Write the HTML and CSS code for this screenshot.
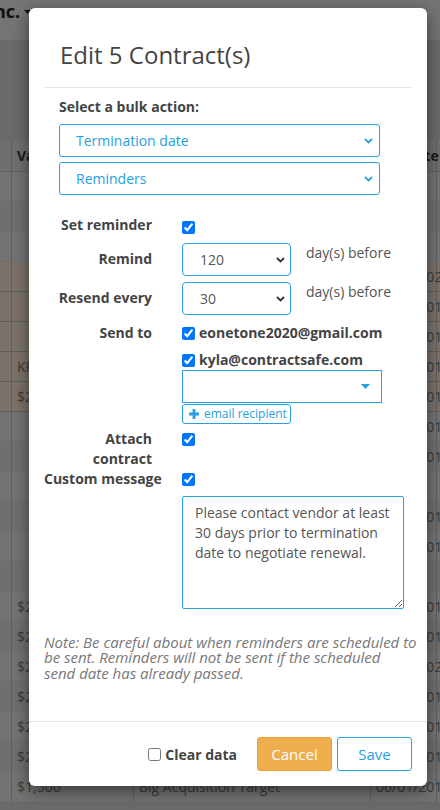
FILE: index.html
```html
<!DOCTYPE html>
<html lang="en">
<head>
<meta charset="utf-8">
<title>Edit Contracts</title>
<link rel="stylesheet" href="styles.css">
</head>
<body>
<div class="page">
  <div class="topbar">
    <span class="brand">Inc.</span>
    <svg class="brand-caret" width="7" height="4" viewBox="0 0 7 4"><path d="M0 0h7L3.5 4z" fill="currentColor"/></svg>
  </div>
  <div class="toolbar"></div>
  <div class="table">
    <div class="tr th"><div class="td"></div><div class="td">Value</div><div class="td">Counterparty</div><div class="td">End Date</div><div class="td">Status</div></div>
    <div class="tr"><div class="td"></div><div class="td"></div><div class="td"></div><div class="td"></div><div class="td"></div></div>
    <div class="tr"><div class="td"></div><div class="td"></div><div class="td"></div><div class="td"></div><div class="td"></div></div>
    <div class="tr"><div class="td"></div><div class="td"></div><div class="td"></div><div class="td"></div><div class="td"></div></div>
    <div class="tr tan"><div class="td"></div><div class="td"></div><div class="td">Acme Supplies</div><div class="td">05/01/2021</div><div class="td"></div></div>
    <div class="tr tan"><div class="td"></div><div class="td"></div><div class="td">Globex</div><div class="td">08/15/2019</div><div class="td"></div></div>
    <div class="tr tan"><div class="td"></div><div class="td"></div><div class="td">Initech</div><div class="td">11/30/2019</div><div class="td"></div></div>
    <div class="tr tan"><div class="td"></div><div class="td">KPI bonus</div><div class="td">Umbrella</div><div class="td">01/01/2019</div><div class="td"></div></div>
    <div class="tr tan"><div class="td"></div><div class="td">$2,500</div><div class="td">Hooli</div><div class="td">03/01/2019</div><div class="td"></div></div>
    <div class="tr"><div class="td"></div><div class="td"></div><div class="td"></div><div class="td">03/01/2019</div><div class="td"></div></div>
    <div class="tr"><div class="td"></div><div class="td"></div><div class="td"></div><div class="td">04/12/2019</div><div class="td"></div></div>
    <div class="tr"><div class="td"></div><div class="td"></div><div class="td"></div><div class="td"></div><div class="td"></div></div>
    <div class="tr"><div class="td"></div><div class="td"></div><div class="td"></div><div class="td">07/01/2019</div><div class="td"></div></div>
    <div class="tr"><div class="td"></div><div class="td"></div><div class="td"></div><div class="td">09/15/2019</div><div class="td"></div></div>
    <div class="tr"><div class="td"></div><div class="td"></div><div class="td"></div><div class="td"></div><div class="td"></div></div>
    <div class="tr"><div class="td"></div><div class="td">$2,000</div><div class="td"></div><div class="td">10/01/2019</div><div class="td"></div></div>
    <div class="tr"><div class="td"></div><div class="td">$2,000</div><div class="td"></div><div class="td">12/01/2019</div><div class="td"></div></div>
    <div class="tr"><div class="td"></div><div class="td">$2,400</div><div class="td"></div><div class="td">02/01/2020</div><div class="td"></div></div>
    <div class="tr"><div class="td"></div><div class="td">$2,000</div><div class="td"></div><div class="td">06/01/2019</div><div class="td"></div></div>
    <div class="tr"><div class="td"></div><div class="td">$2,200</div><div class="td"></div><div class="td">06/01/2019</div><div class="td"></div></div>
    <div class="tr"><div class="td"></div><div class="td">$2,000</div><div class="td"></div><div class="td">06/01/2019</div><div class="td"></div></div>
    <div class="tr"><div class="td"></div><div class="td">$1,500</div><div class="td">Big Acquisition Target</div><div class="td">06/01/2019</div><div class="td"></div></div>
  </div>
</div>

<div class="backdrop"></div>

<div class="modal">
  <div class="modal-header">
    <h4 class="modal-title">Edit 5 Contract(s)</h4>
  </div>
  <div class="modal-body">
    <div class="bulk">
      <div class="bulk-label">Select a bulk action:</div>
      <div class="select">
        <span>Termination date</span>
        <svg class="chev" width="9" height="6" viewBox="0 0 9 6"><path d="M1 1l3.5 3.5L8 1" fill="none" stroke="currentColor" stroke-width="1.8"/></svg>
      </div>
      <div class="select">
        <span>Reminders</span>
        <svg class="chev" width="9" height="6" viewBox="0 0 9 6"><path d="M1 1l3.5 3.5L8 1" fill="none" stroke="currentColor" stroke-width="1.8"/></svg>
      </div>
    </div>

    <div class="form">
      <div class="row">
        <div class="label">Set reminder</div>
        <div class="control"><input class="check check-first" type="checkbox" checked></div>
      </div>

      <div class="row row-remind">
        <div class="label label-select">Remind</div>
        <div class="control control-inline">
          <div class="select select-sm">
            <span>120</span>
            <svg class="chev" width="9" height="6" viewBox="0 0 9 6"><path d="M1 1l3.5 3.5L8 1" fill="none" stroke="currentColor" stroke-width="1.8"/></svg>
          </div>
          <span class="suffix">day(s) before</span>
        </div>
      </div>

      <div class="row row-resend">
        <div class="label label-select">Resend every</div>
        <div class="control control-inline">
          <div class="select select-sm">
            <span>30</span>
            <svg class="chev" width="9" height="6" viewBox="0 0 9 6"><path d="M1 1l3.5 3.5L8 1" fill="none" stroke="currentColor" stroke-width="1.8"/></svg>
          </div>
          <span class="suffix">day(s) before</span>
        </div>
      </div>

      <div class="row row-sendto">
        <div class="label">Send to</div>
        <div class="control">
          <label class="email"><input type="checkbox" checked> eonetone2020@gmail.com</label>
          <label class="email email-second"><input type="checkbox" checked> kyla@contractsafe.com</label>
          <div class="dropdown">
            <svg width="9" height="5" viewBox="0 0 9 5"><path d="M0 0h9L4.5 5z" fill="currentColor"/></svg>
          </div>
          <button class="add-btn" type="button">
            <svg width="10" height="10" viewBox="0 0 10 10"><path d="M3.6 0h2.8v10H3.6zM0 3.6h10v2.8H0z" fill="currentColor"/></svg>
            <span>email recipient</span>
          </button>
        </div>
      </div>

      <div class="row row-attach">
        <div class="label">Attach contract</div>
        <div class="control"><input class="check" type="checkbox" checked></div>
      </div>

      <div class="row">
        <div class="label">Custom&nbsp;message</div>
        <div class="control"><input class="check" type="checkbox" checked></div>
      </div>

      <div class="row row-message">
        <div class="label"></div>
        <div class="control">
          <textarea class="message">Please contact vendor at least 30 days prior to termination date to negotiate renewal.</textarea>
        </div>
      </div>
    </div>

    <p class="note">Note: Be careful about when reminders are scheduled to<br>be sent. Reminders will not be sent if the scheduled<br>send date has already passed.</p>
  </div>
  <div class="modal-footer">
    <label class="clear"><input type="checkbox"> Clear data</label>
    <button class="btn btn-cancel" type="button">Cancel</button>
    <button class="btn btn-save" type="button">Save</button>
  </div>
</div>
</body>
</html>
```

FILE: styles.css
```css
* {
  box-sizing: border-box;
}

html,
body {
  margin: 0;
  padding: 0;
}

body {
  position: relative;
  width: 440px;
  height: 810px;
  overflow: hidden;
  font-family: "Open Sans", "DejaVu Sans", sans-serif;
  font-size: 14px;
  color: #333;
  background: #d4d4d4;
}

/* ---------- page underneath ---------- */
.topbar {
  height: 40px;
  display: flex;
  align-items: flex-start;
  background: #e8e8e8;
  color: #222;
}

.brand {
  margin-left: -12px;
  font-size: 18px;
  font-weight: 700;
  line-height: 22px;
}

.brand-caret {
  margin: 10px 0 0 4px;
}

.toolbar {
  height: 100px;
}

.tr {
  display: grid;
  grid-template-columns: 12px 122px 237px 66px 1fr;
  height: 30px;
  background: #e6e6e6;
  border-bottom: 1px solid #dadada;
}

.tr:nth-child(odd) {
  background: #dedede;
}

.th {
  height: 32px;
  background: #e2e2e2;
  border-bottom: 1px solid #c4c4c4;
  font-weight: 700;
  color: #333;
}

.tr.tan {
  background: #f4e3d4;
  border-bottom: 1px solid #bdbab7;
}

.td {
  padding: 0 5px;
  border-right: 1px solid #bcbcbc;
  line-height: 30px;
  white-space: nowrap;
  overflow: hidden;
  color: #777;
}

.td:nth-child(4) {
  overflow: visible;
}

.th .td {
  line-height: 31px;
  color: #333;
}

.backdrop {
  position: absolute;
  inset: 0;
  background: rgba(0, 0, 0, 0.5);
}

/* ---------- modal ---------- */
.modal {
  position: absolute;
  left: 29px;
  top: 8px;
  width: 398px;
  background: #fff;
  border-radius: 6px;
  box-shadow: 0 5px 15px rgba(0, 0, 0, 0.5);
}

.modal-header {
  margin: 0 15px;
  padding: 31px 15px 16px 16px;
  border-bottom: 1px solid #e5e5e5;
}

.modal-title {
  margin: 0;
  font-size: 24px;
  font-weight: 400;
  line-height: 32px;
  color: #444;
}

.modal-body {
  padding: 9px 15px 40px;
}

.bulk {
  padding: 0 32px 0 15px;
}

.bulk-label {
  margin-bottom: 7px;
  font-weight: 700;
  line-height: 20px;
  color: #444;
}

.select {
  height: 33px;
  display: flex;
  align-items: center;
  justify-content: space-between;
  padding: 0 6px 0 16px;
  border: 1px solid #27a1e3;
  border-radius: 3px;
  line-height: 20px;
  color: #27a0e2;
}

.select + .select {
  margin-top: 5px;
}

.select-sm {
  width: 109px;
  padding: 0 5px 0 17px;
  border-radius: 4px;
  color: #555;
}

.select-sm .chev {
  color: #333;
}

.form {
  margin-top: 20px;
}

.row {
  display: grid;
  grid-template-columns: 108px 1fr;
  column-gap: 30px;
}

.row-remind {
  margin-top: 8px;
}

.row-resend {
  margin-top: 6px;
}

.row-sendto {
  margin-top: 8px;
}

.row-attach {
  margin-top: 5px;
}

.row-message {
  margin-top: 7px;
}

.label {
  min-width: 0;
  text-align: right;
  font-weight: 700;
  line-height: 20px;
  color: #444;
}

.label-select {
  padding-top: 6px;
}

.control {
  min-width: 0;
}

.control-inline {
  display: flex;
  align-items: flex-start;
}

.suffix {
  margin-left: 15px;
  line-height: 20px;
  color: #555;
}

input[type="checkbox"] {
  width: 13px;
  height: 13px;
  margin: 0;
}

.control .check {
  display: block;
  margin-top: 4px;
}

.control .check-first {
  margin-top: 6px;
}

.email {
  display: flex;
  align-items: center;
  gap: 4px;
  font-weight: 700;
  line-height: 20px;
  color: #444;
}

.email-second {
  margin-top: 7px;
}

.dropdown {
  width: 200px;
  height: 33px;
  display: flex;
  align-items: center;
  justify-content: flex-end;
  padding-right: 11px;
  border: 1px solid #27a1e3;
  color: #27a0e2;
}

.add-btn {
  width: 109px;
  height: 20px;
  margin-top: 1px;
  display: flex;
  align-items: center;
  gap: 5px;
  padding: 0 0 0 6px;
  border: 1px solid #27a1e3;
  border-radius: 3px;
  background: #fff;
  font-family: inherit;
  font-size: 12px;
  line-height: 16px;
  color: #27a0e2;
}

.message {
  display: block;
  width: 222px;
  height: 113px;
  margin: 0;
  padding: 6px 6px 6px 12px;
  border: 1px solid #27a1e3;
  border-radius: 2px;
  font-family: inherit;
  font-size: 14px;
  line-height: 20px;
  color: #555;
}

.note {
  margin: 26px -12px 0 0;
  font-size: 15px;
  font-style: italic;
  line-height: 15.4px;
  white-space: nowrap;
  color: #777;
}

.modal-footer {
  display: flex;
  justify-content: flex-end;
  align-items: center;
  gap: 5px;
  padding: 15px;
  border-top: 1px solid #e5e5e5;
}

.clear {
  display: flex;
  align-items: center;
  gap: 4px;
  margin-right: 15px;
  font-weight: 700;
  color: #444;
}

.btn {
  width: 75px;
  height: 34px;
  padding: 0;
  border-radius: 3px;
  font-family: inherit;
  font-size: 15px;
}

.btn-cancel {
  background: #f0ad4e;
  border: 1px solid #eea236;
  color: #fff;
}

.btn-save {
  background: #fff;
  border: 1px solid #27a1e3;
  color: #27a0e2;
}
```
